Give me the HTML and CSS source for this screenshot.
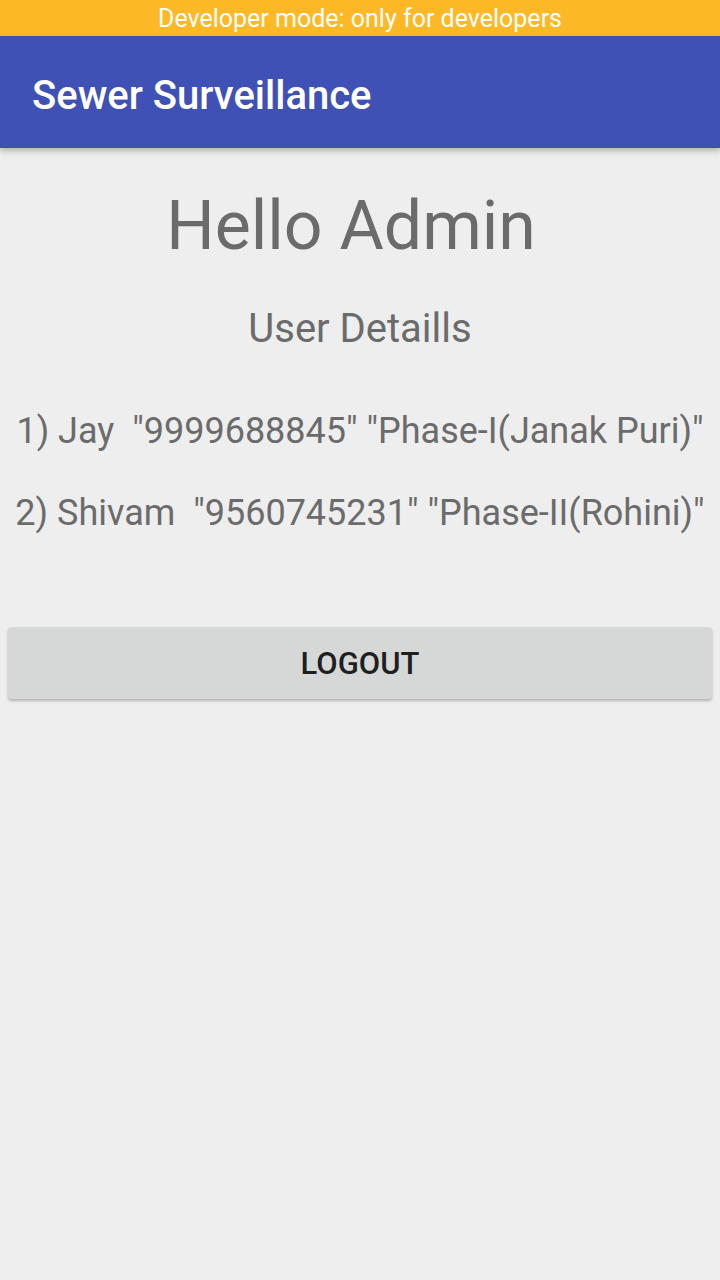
FILE: index.html
```html
<!DOCTYPE html>
<html>
<head>
<meta charset="utf-8">
<link rel="stylesheet" href="styles.css">
</head>
<body>
<div class="status">Developer mode: only for developers</div>
<header class="toolbar"><h1 class="title">Sewer Surveillance</h1></header>
<main class="content">
  <h2 class="hello">Hello Admin</h2>
  <h3 class="subtitle">User Detaills</h3>
  <p class="row first">1) Jay&nbsp; "9999688845" "Phase-I(Janak Puri)"</p>
  <p class="row">2) Shivam&nbsp; "9560745231" "Phase-II(Rohini)"</p>
  <button class="logout">LOGOUT</button>
</main>
</body>
</html>
```
FILE: styles.css
```css
html, body {
  margin: 0;
  padding: 0;
  background: #eeeeee;
  font-family: Roboto, "Noto Sans", sans-serif;
  height: 1280px;
  overflow: hidden;
}
.status {
  height: 36px;
  background: #fdb825;
  color: #ffffff;
  font-size: 25px;
  line-height: 38px;
  text-align: center;
}
.toolbar {
  height: 112px;
  background: #3f51b5;
  display: flex;
  align-items: center;
  padding-left: 32px;
  box-shadow: 0 3px 6px rgba(0,0,0,0.25);
  position: relative;
}
.title {
  margin: 6px 0 0;
  color: #ffffff;
  font-size: 40px;
  font-weight: 500;
}
.content {
  display: flex;
  flex-direction: column;
  align-items: center;
  padding: 0 8px;
}
.hello {
  margin: 28px 18px 0 0;
  font-size: 68px;
  font-weight: 400;
  color: #6b6b6b;
  line-height: 100px;
}
.subtitle {
  margin: 23px 0 0;
  font-size: 40px;
  font-weight: 400;
  color: #6b6b6b;
  line-height: 60px;
}
.row {
  margin: 38px 0 0;
  font-size: 36px;
  color: #6b6b6b;
  line-height: 44px;
  white-space: nowrap;
}
.row.first {
  margin-top: 50px;
}
.logout {
  margin-top: 92px;
  align-self: stretch;
  height: 72px;
  border: none;
  border-radius: 4px;
  background: #d6d7d7;
  box-shadow: 0 2px 3px rgba(0,0,0,0.25);
  font-family: Roboto, sans-serif;
  font-size: 31px;
  font-weight: 500;
  color: #1f1f1f;
}
```
